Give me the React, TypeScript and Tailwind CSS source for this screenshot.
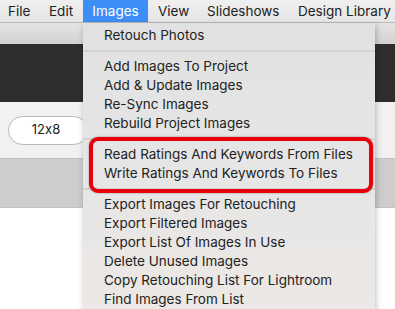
import React from 'react'

const font = { fontFamily: 'Inter, "Noto Sans", sans-serif' }

const groups = [
  ['Retouch Photos'],
  ['Add Images To Project', 'Add & Update Images', 'Re-Sync Images', 'Rebuild Project Images'],
  ['Read Ratings And Keywords From Files', 'Write Ratings And Keywords To Files'],
  [
    'Export Images For Retouching',
    'Export Filtered Images',
    'Export List Of Images In Use',
    'Delete Unused Images',
    'Copy Retouching List For Lightroom',
    'Find Images From List',
  ],
]

function MenuItem({ label }: { label: string }) {
  return (
    <div className="h-[19px] whitespace-nowrap pl-[21px] text-[13.5px] leading-[19px] text-[#222]">{label}</div>
  )
}

export default function App() {
  return (
    <div
      className="relative h-[309px] w-[395px] overflow-hidden bg-white [font-feature-settings:'calt'_0]"
      style={font}
    >
      {/* Menu bar */}
      <div className="flex h-[23px] items-stretch whitespace-nowrap border-b border-[#b9b9b9] bg-gradient-to-b from-[#efefef] to-[#e6e6e6] pl-[8px] text-[13.5px] leading-[22px] text-[#222]">
        <span className="w-[41px] shrink-0">File</span>
        <span className="w-[34px] shrink-0">Edit</span>
        <span className="w-[65px] shrink-0 bg-[#3d8ef6] text-center text-white">Images</span>
        <span className="ml-[10px] w-[49px] shrink-0">View</span>
        <span className="w-[91px] shrink-0">Slideshows</span>
        <span className="shrink-0">Design Library</span>
      </div>

      {/* Toolbar */}
      <div className="h-[21px] bg-gradient-to-b from-[#e4e4e4] to-[#d2d2d2]" />
      <div className="h-[58px] bg-[#2e2e2e]" />
      <div className="flex h-[56px] items-center bg-[#f1f1f1] pl-[8px]">
        <div className="flex h-[29px] w-[80px] items-center justify-center rounded-full border border-[#b8b8b8] bg-white pr-[4px] text-[13px] text-[#222]">
          12x8
        </div>
      </div>
      <div className="h-[50px] border-t border-b border-[#c2c2c2] bg-[#cdcdcd]" />

      {/* Images dropdown */}
      <div className="absolute left-[83px] top-[23px] w-[292px] bg-gradient-to-b from-[#e1e1e1] via-[#e6e6e6] to-[#ece8e5] pt-[3px] pb-[4px] shadow-[1px_2px_6px_rgba(0,0,0,0.25)]">
        {groups.map((g, i) => (
          <div key={i}>
            {i > 0 && (
              <div className="flex h-[12px] items-center">
                <div className="h-[2px] w-full bg-[#d2d2d2]" />
              </div>
            )}
            {g.map((l) => (
              <MenuItem key={l} label={l} />
            ))}
          </div>
        ))}
      </div>

      {/* Highlight annotation */}
      <div className="absolute left-[89px] top-[137px] h-[56px] w-[284px] rounded-[9px] border-[4px] border-[#e8000b] shadow-[0_0_2px_rgba(0,0,0,0.45)]" />
    </div>
  )
}
